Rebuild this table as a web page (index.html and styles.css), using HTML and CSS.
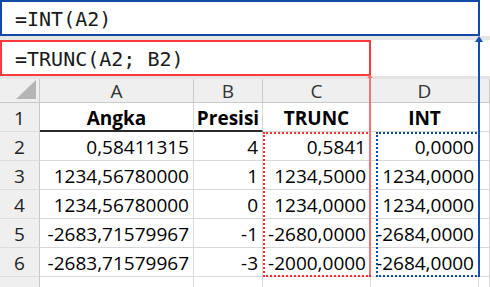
FILE: index.html
```html
<!DOCTYPE html>
<html lang="id">
<head>
    <meta charset="UTF-8">
    <title>TRUNC vs INT</title>
    <link rel="stylesheet" href="styles.css">
</head>
<body>
    <div class="page">
        <div class="bar">
            <div class="formula formula-int">=INT(A2)</div>
        </div>
        <div class="bar bar-last">
            <div class="formula formula-trunc">=TRUNC(A2; B2)</div>
        </div>

        <div class="sheet">
            <div class="hd corner"><span class="corner-mark"></span></div>
            <div class="hd">A</div>
            <div class="hd">B</div>
            <div class="hd">C</div>
            <div class="hd">D</div>
            <div class="hd"></div>

            <div class="rh">1</div>
            <div class="cell title total">Angka</div>
            <div class="cell title total">Presisi</div>
            <div class="cell title">TRUNC</div>
            <div class="cell title">INT</div>
            <div class="cell"></div>

            <div class="rh">2</div>
            <div class="cell num">0,58411315</div>
            <div class="cell num">4</div>
            <div class="cell num">0,5841</div>
            <div class="cell num">0,0000</div>
            <div class="cell"></div>

            <div class="rh">3</div>
            <div class="cell num">1234,56780000</div>
            <div class="cell num">1</div>
            <div class="cell num">1234,5000</div>
            <div class="cell num">1234,0000</div>
            <div class="cell"></div>

            <div class="rh">4</div>
            <div class="cell num">1234,56780000</div>
            <div class="cell num">0</div>
            <div class="cell num">1234,0000</div>
            <div class="cell num">1234,0000</div>
            <div class="cell"></div>

            <div class="rh">5</div>
            <div class="cell num">-2683,71579967</div>
            <div class="cell num">-1</div>
            <div class="cell num">-2680,0000</div>
            <div class="cell num">-2684,0000</div>
            <div class="cell"></div>

            <div class="rh">6</div>
            <div class="cell num">-2683,71579967</div>
            <div class="cell num">-3</div>
            <div class="cell num">-2000,0000</div>
            <div class="cell num">-2684,0000</div>
            <div class="cell"></div>

            <div class="rh"></div>
            <div class="cell"></div>
            <div class="cell"></div>
            <div class="cell"></div>
            <div class="cell"></div>
            <div class="cell"></div>
        </div>

        <!-- copy ranges and the arrows back to their formulas -->
        <div class="marquee marquee-trunc"></div>
        <div class="marquee marquee-int"></div>
        <div class="arrow arrow-trunc"></div>
        <div class="arrow arrow-int"></div>
    </div>
</body>
</html>
```

FILE: styles.css
```css
body {
    margin: 0;
    background-color: white;
    overflow: hidden;
}

.page {
    position: relative;
    width: 490px;
    height: 287px;
    overflow: hidden;
}

/* formula bars */
.bar {
    height: 36px;
    border-bottom: 4px solid #e4e4e4;
    background-color: white;
}

.bar-last {
    border-bottom-width: 3px;
}

.formula {
    height: 36px;
    box-sizing: border-box;
    padding: 5px 0 0 13px;
    font-family: "DejaVu Sans Mono", "Liberation Mono", monospace;
    font-size: 20px;
    color: #1a1a1a;
}

.formula-int {
    width: 480px;
    border: 2px solid #0f4aa6;
}

.formula-trunc {
    width: 371px;
    border: 2px solid #ff3a3a;
}

/* worksheet */
.sheet {
    display: grid;
    grid-template-columns: 40px 154px 69px 108px 108px 1fr;
    grid-template-rows: 24px repeat(6, 29px) 20px;
    font-family: "Open Sans", "Noto Sans", sans-serif;
    font-size: 19px;
    font-weight: 500;
    color: #000;
}

.sheet > div {
    box-sizing: border-box;
    border-right: 1px solid #d9d9d9;
    border-bottom: 1px solid #d9d9d9;
    display: flex;
    align-items: center;
    white-space: nowrap;
}

.hd {
    background-color: #efefef;
    justify-content: center;
    color: #333;
    font-weight: normal;
    border-color: #c9c9c9 !important;
    padding-top: 1px;
}

.corner {
    position: relative;
}

.corner-mark {
    position: absolute;
    right: 3px;
    bottom: 3px;
    width: 20px;
    height: 19px;
    background-color: #b5b5b5;
    clip-path: polygon(100% 0, 100% 100%, 0 100%);
}

.rh {
    background-color: #efefef;
    justify-content: center;
    color: #222;
    font-weight: normal;
    border-right-color: #c9c9c9 !important;
    border-bottom-color: #dcdcdc !important;
    padding-top: 2px;
}

.cell {
    padding: 2px 4px 0 4px;
}

.num {
    justify-content: flex-end;
}

.title {
    justify-content: center;
    font-weight: bold;
}

.total {
    border-bottom: 2px solid #2b2b2b !important;
}

/* marching-ants copy ranges */
.marquee {
    position: absolute;
    top: 132px;
    height: 145px;
    box-sizing: border-box;
    border-width: 2px;
    border-style: dotted;
}

.marquee-trunc {
    left: 263px;
    width: 108px;
    border-color: #ff2e2e;
}

.marquee-int {
    left: 376px;
    width: 104px;
    border-color: #0f4aa6;
}

/* arrows from result ranges up to the formulas */
.arrow {
    position: absolute;
    width: 2px;
}

.arrow::before {
    content: "";
    position: absolute;
    left: -3px;
    top: -2px;
    border-left: 4px solid transparent;
    border-right: 4px solid transparent;
    border-bottom: 6px solid currentColor;
}

.arrow-int {
    left: 478px;
    top: 38px;
    height: 237px;
    color: #1450b4;
    background-color: #1450b4;
}

.arrow-trunc {
    left: 369px;
    top: 77px;
    height: 198px;
    color: #f47474;
    background-color: #f47474;
}

.arrow-trunc::before {
    left: -2px;
    border-left-width: 3px;
    border-right-width: 3px;
    border-bottom-width: 3px;
}
```
